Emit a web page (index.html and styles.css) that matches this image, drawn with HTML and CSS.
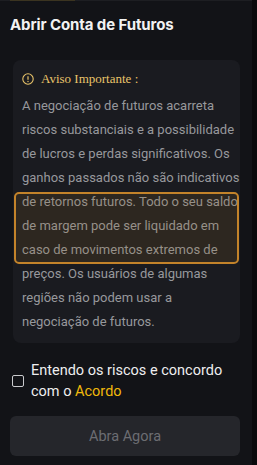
FILE: index.html
```html
<!DOCTYPE html>
<html lang="pt">
<head>
    <meta charset="UTF-8">
    <meta name="viewport" content="width=device-width, initial-scale=1.0">
    <title>Abrir Conta de Futuros</title>
    <link rel="stylesheet" href="styles.css">
</head>
<body>
    <div class="page">
        <div class="panel">
            <div class="top-tab"></div>

            <h1 class="title">Abrir Conta de Futuros</h1>

            <!-- aviso -->
            <div class="notice">
                <div class="notice-head">
                    <svg class="notice-icon" viewBox="0 0 12 12" width="12" height="12">
                        <circle cx="6" cy="6" r="5.2" fill="none" stroke="#e9c46a" stroke-width="1.1"/>
                        <line x1="6" y1="3.2" x2="6" y2="6.8" stroke="#e9c46a" stroke-width="1.2"/>
                        <circle cx="6" cy="8.5" r="0.7" fill="#e9c46a"/>
                    </svg>
                    <span>Aviso Importante :</span>
                </div>
                <div class="notice-body">
                    <p>A negociação de futuros acarreta<br>
                    riscos substanciais e a possibilidade<br>
                    de lucros e perdas significativos. Os<br>
                    ganhos passados não são indicativos<br>
                    de retornos futuros. Todo o seu saldo<br>
                    de margem pode ser liquidado em<br>
                    caso de movimentos extremos de<br>
                    preços. Os usuários de algumas<br>
                    regiões não podem usar a<br>
                    negociação de futuros.</p>
                    <div class="mark"></div>
                </div>
            </div>

            <label class="agree">
                <input type="checkbox" class="agree-box">
                <span class="agree-text">Entendo os riscos e concordo<br>com o <a href="#">Acordo</a></span>
            </label>

            <button class="open-btn" disabled>Abra Agora</button>
        </div>
        <div class="edge"></div>
    </div>
</body>
</html>
```

FILE: styles.css
```css
* {
    margin: 0;
    padding: 0;
    box-sizing: border-box;
    font-family: Roboto, 'Noto Sans', sans-serif;
}

body {
    background-color: #0b0b0d;
    width: 257px;
    height: 465px;
    overflow: hidden;
}

.page {
    display: flex;
    height: 465px;
}

.panel {
    width: 252px;
    background: #121317;
    border-top: 1px solid #1d1e22;
    padding: 0 12px 0 10px;
    position: relative;
}

.edge {
    flex: 1;
    background: #0a0a0c;
}

/* leftover tab underline at the top */
.top-tab {
    position: absolute;
    top: -1px;
    left: 10px;
    width: 65px;
    height: 1px;
    background: #3b3420;
}

.title {
    color: #f2f2f2;
    font-family: Inter, sans-serif;
    font-size: 15px;
    font-weight: 700;
    line-height: 20px;
    margin-top: 14px;
    letter-spacing: -0.1px;
}

/* bloco de aviso */
.notice {
    margin: 25px 0 0 3px;
    background: #1a1b20;
    border-radius: 8px;
    padding: 10px 0 9px 9px;
}

.notice-head {
    display: flex;
    align-items: center;
    gap: 7px;
    height: 18px;
    color: #e9c46a;
    font-size: 13px;
}

.notice-head span {
    font-family: 'Liberation Serif', serif;
}

.notice-icon {
    flex: none;
}

.notice-body {
    position: relative;
    margin-top: 6px;
}

.notice-body p {
    color: #97989c;
    font-size: 13px;
    line-height: 24px;
    white-space: nowrap;
}

.mark {
    position: absolute;
    top: 98px;
    left: -8px;
    width: 225px;
    height: 72px;
    border: 2px solid #c3832a;
    border-radius: 5px;
    background: rgba(150, 105, 40, 0.16);
}

/* aceite */
.agree {
    display: flex;
    align-items: center;
    margin-top: 17px;
    gap: 7px;
    cursor: pointer;
}

.agree-box {
    appearance: none;
    flex: none;
    width: 12px;
    height: 12px;
    border: 1.5px solid #c9cacd;
    border-radius: 2px;
    margin-left: 2px;
}

.agree-text {
    color: #eeeeef;
    font-size: 14.5px;
    line-height: 21px;
}

.agree-text a {
    color: #f0b90b;
    text-decoration: none;
}

.open-btn {
    display: block;
    width: 230px;
    height: 40px;
    margin-top: 14px;
    border: none;
    border-radius: 6px;
    background: #25262b;
    color: #6c6d72;
    font-size: 14.5px;
}
```
